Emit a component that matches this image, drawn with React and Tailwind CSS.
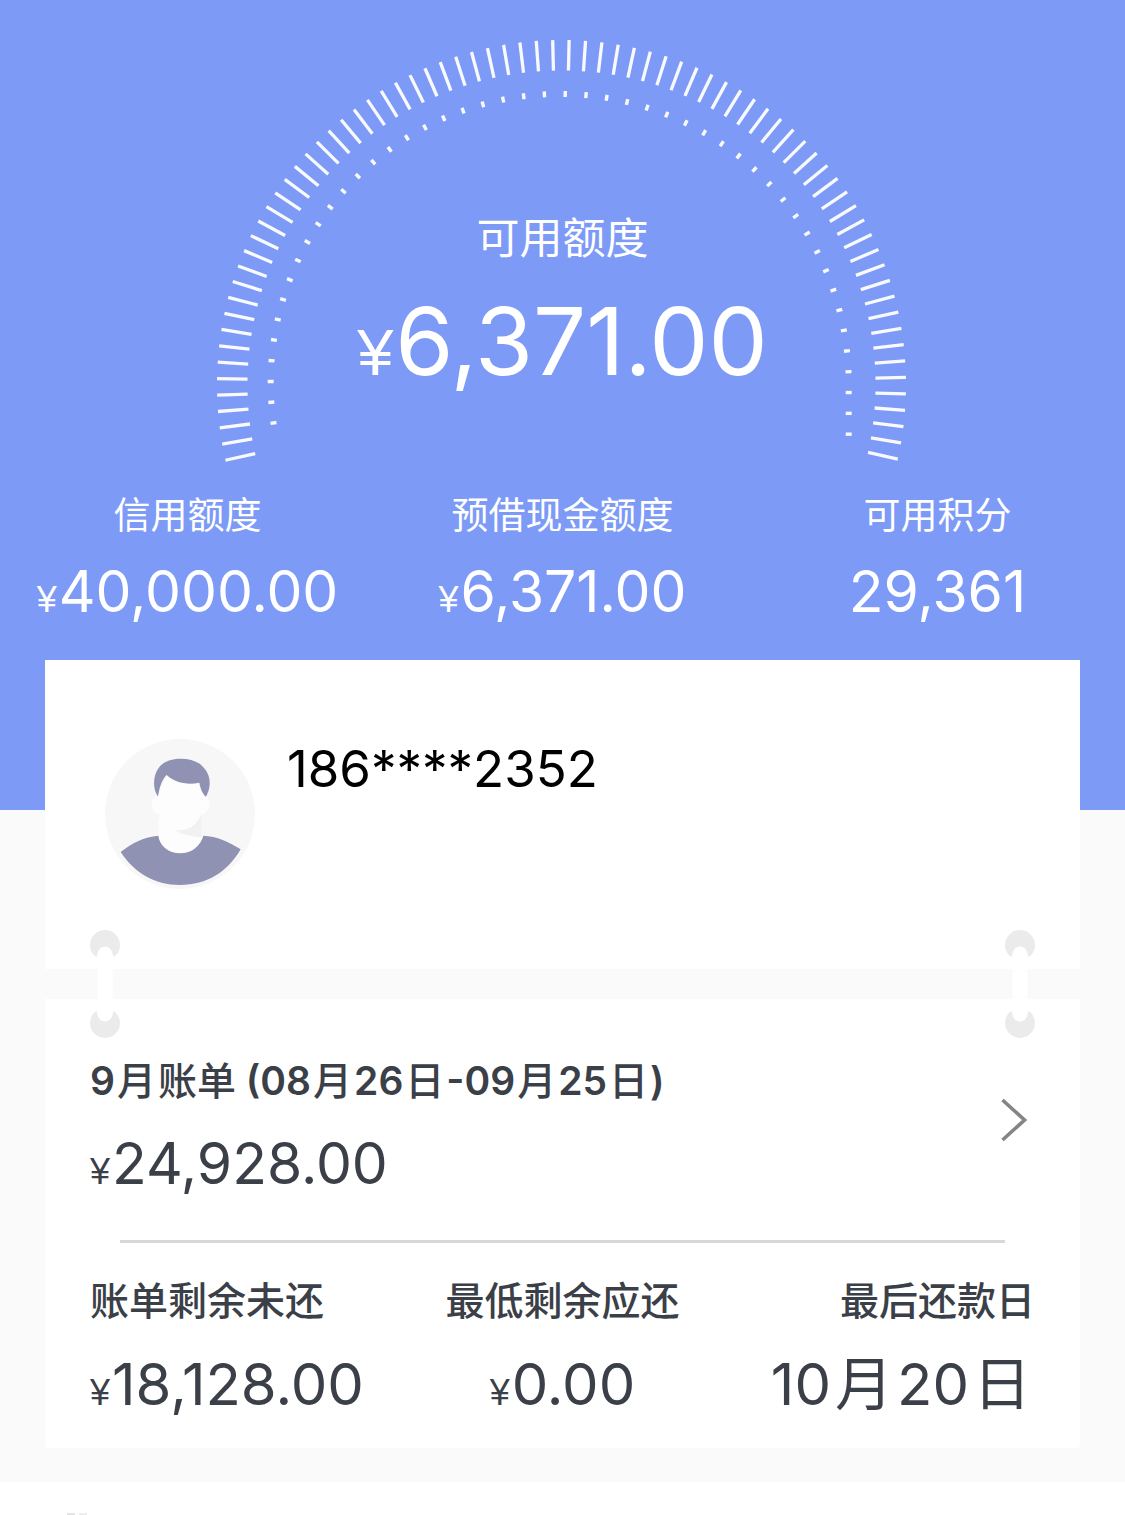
const TICKS = Array.from({ length: 76 }, (_, i) => -102.7 + i * 2.736)
const DOTS = Array.from({ length: 49 }, (_, i) => -97.95 + i * 4.127)

const STATS = [
  { label: '信用额度', value: '40,000.00', money: true },
  { label: '预借现金额度', value: '6,371.00', money: true },
  { label: '可用积分', value: '29,361' },
]

function Money({ children, symbol = 'text-[36px]' }) {
  return (
    <>
      <span className={`${symbol} mr-0.5 font-['Liberation_Sans',sans-serif] leading-none`}>¥</span>
      {children}
    </>
  )
}

// 月 / 日 with a little air between them and the digits
function Unit({ children, className = 'mx-0.5 font-medium' }) {
  return <span className={className}>{children}</span>
}

function Gauge() {
  return (
    <svg viewBox="217 40 692 424" className="col-start-1 row-start-1 h-[424px] w-[692px]" fill="none" stroke="#fff" aria-hidden="true">
      {TICKS.map((a) => (
        <path key={a} d="M561.5 40v30.500" strokeWidth="3.3" strokeOpacity=".95" transform={`rotate(${a} 561.5 384.5)`} />
      ))}
      {DOTS.map((a) => {
        // past the horizontal the right side runs straight down
        const extra = a > 90 ? ((a - 90) * Math.PI * 289) / 180 : 0
        return (
          <path
            key={a}
            d="M559.7 91v6"
            strokeWidth="3.4"
            strokeOpacity=".95"
            transform={`translate(0 ${extra}) rotate(${Math.min(a, 90)} 559.7 383)`}
          />
        )
      })}
    </svg>
  )
}

function Avatar() {
  return (
    <svg viewBox="0 0 450 450" className="size-[150px] shrink-0" aria-hidden="true">
      <circle cx="225" cy="225" r="225" fill="#f7f7f7" />
      <path d="M160 235h130v58c0 32-30 50-64 50s-64-20-66-52z" fill="#fdfdfd" />
      <path d="M205 272c30 4 62-8 85-44v66c-24 0-52-6-85-22z" fill="#f1f1f2" />
      <path d="M160 168c-20 2-24 30-14 46 5 9 12 12 20 14 10 24 34 46 59 46 28 0 52-20 62-46 10-2 17-8 22-18 8-18 4-38-8-44l-14-50-100-14z" fill="#fdfdfd" />
      <path d="M159 173c-18-26-14-66 2-86 22-36 106-38 134-2 24 24 24 60 8 88-10-8-17-24-20-42-36 8-74 0-98-23-16 16-22 40-26 65z" fill="#9092b3" />
      <path d="M47 339c32-26 72-46 113-49 4 30 30 53 66 53 34 0 62-24 69-53 40 2 78 18 112 41-40 68-100 107-182 107-76 0-138-37-178-99z" fill="#9092b3" />
    </svg>
  )
}

function Connector() {
  return (
    <svg viewBox="0 0 30 108" className="h-[108px] w-[30px]" aria-hidden="true">
      <circle cx="15" cy="15" r="15" fill="#ebebeb" />
      <circle cx="15" cy="93" r="15" fill="#ebebeb" />
      <path d="M7.500 24a7.500 7.500 0 0 1 15 0l2 5v3h-2v44h2v3l-2 5a7.500 7.500 0 0 1-15 0l-2-5v-3h2v-44h-2v-3z" fill="#fff" />
    </svg>
  )
}

function Bill() {
  return (
    <section className="rounded-b-sm bg-white px-[45px] pt-14 pb-8">
      <button type="button" className="flex w-full items-center justify-between pr-2 text-left">
        <span>
          <span className="block text-[39px] leading-[52px] font-semibold">
            9<Unit>月</Unit><span className="font-medium">账单</span> (08<Unit>月</Unit>26<Unit>日</Unit>-09<Unit>月</Unit>25<Unit>日</Unit>)
          </span>
          <span className="mt-[25px] block text-[57px] leading-[64px]">
            <Money>24,928.00</Money>
          </span>
        </span>
        <svg viewBox="0 0 26 44" className="mb-3 h-11 w-[26px]" fill="none" stroke="#858585" strokeWidth="3.6" aria-hidden="true">
          <path d="M1.500 2L23.500 22L1.500 42" />
        </svg>
      </button>
      <hr className="mx-[30px] mt-11 h-[3px] border-0 bg-[#d8d8d8]" />
      <dl className="mt-8 grid grid-cols-3">
        <div>
          <dt className="text-[39px] leading-[52px] font-medium">账单剩余未还</dt>
          <dd className="mt-[25px] text-[58px] leading-[64px]">
            <Money>18,128.00</Money>
          </dd>
        </div>
        <div className="text-center">
          <dt className="text-[39px] leading-[52px] font-medium">最低剩余应还</dt>
          <dd className="mt-[25px] text-[58px] leading-[64px]">
            <Money>0.00</Money>
          </dd>
        </div>
        <div className="text-right">
          <dt className="text-[39px] leading-[52px] font-medium">最后还款日</dt>
          <dd className="mt-[25px] text-[58px] leading-[64px]">
            10<Unit className="mx-1">月</Unit>20<Unit className="mx-1">日</Unit>
          </dd>
        </div>
      </dl>
    </section>
  )
}

export default function App() {
  return (
    <div className="bg-white font-['Inter','Noto_Sans_CJK_SC',sans-serif] text-[#3b3f48]">
      <header className="bg-[#7c9af6] pt-10 pb-[186px] text-white">
        <div className="grid justify-center">
          <Gauge />
          <div className="col-start-1 row-start-1 pt-[170px] text-center">
            <div className="text-[43px] leading-[56px]">可用额度</div>
            <div className="mt-[27px] text-[94px] leading-[96px]">
              <Money symbol="text-[65px]">6,371.00</Money>
            </div>
          </div>
        </div>
        <dl className="mt-7 grid grid-cols-3 text-center">
          {STATS.map((s) => (
            <div key={s.label}>
              <dt className="text-[37px] leading-[48px]">{s.label}</dt>
              <dd className="mt-5 text-[57px] leading-[64px]">{s.money ? <Money>{s.value}</Money> : s.value}</dd>
            </div>
          ))}
        </dl>
      </header>

      <div className="flow-root bg-[#fafafa] px-[45px] pb-[34px]">
        <main className="relative -mt-[150px] flex flex-col gap-[30px]">
          <section className="relative flex items-start gap-8 bg-white px-[60px] pt-[79px] pb-20">
            <Avatar />
            <h1 className="text-[51px] leading-[60px] text-black">186****2352</h1>
            <div className="absolute inset-x-[45px] -bottom-[69px] z-10 flex justify-between">
              <Connector />
              <Connector />
            </div>
          </section>
          <Bill />
        </main>
      </div>

      <footer className="px-[67px] pt-[31px]">
        <div className="flex gap-1">
          <div className="h-0.5 w-2 bg-[#e4e4e4]" />
          <div className="h-0.5 w-2 bg-[#ececec]" />
        </div>
      </footer>
    </div>
  )
}
